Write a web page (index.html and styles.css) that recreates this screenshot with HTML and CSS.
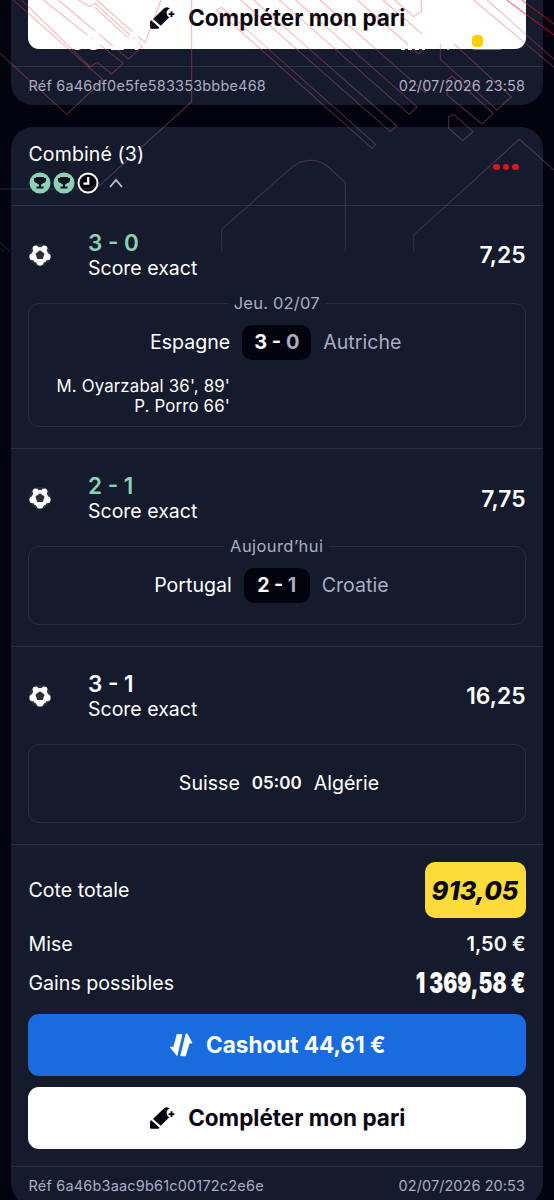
FILE: index.html
```
<!DOCTYPE html>
<html lang="fr">
<head>
<meta charset="utf-8">
<title>Mes paris</title>
<link rel="stylesheet" href="styles.css">
</head>
<body>
<svg class="defs" width="0" height="0">
  <symbol id="pencil" viewBox="0 0 26 26">
    <path d="M4 14 14.500 3.700Q18 .600 21 3.800Q17.500 4.600 17.600 8.600Q18 11.200 20.300 12.300L11.800 20.800Z"/>
    <path d="M2.300 15.200 10.500 22.700 9.500 23.700H2.300Q1 23.700 1 22.400V16.500Z"/>
    <path d="M22.500 6.200V12M19.600 9.100H25.400" stroke="currentColor" stroke-width="1.900"/>
  </symbol>
  <symbol id="ball" viewBox="0 0 24 24">
    <circle cx="12" cy="12" r="11" fill="#2d2e38"/>
    <g fill="#fff">
      <circle cx="12" cy="12.300" r="8.300"/>
      <circle cx="7.600" cy="5.400" r="3"/>
      <circle cx="16.400" cy="5.400" r="3"/>
      <circle cx="4.900" cy="13.700" r="3.500"/>
      <circle cx="19.100" cy="13.700" r="3.500"/>
      <circle cx="12" cy="18.900" r="3.600"/>
    </g>
    <path d="M12 7.300 16.500 10.500 14.800 15.900H9.200L7.500 10.500Z" fill="#2d2e38"/>
  </symbol>
  <symbol id="cup" viewBox="0 0 22 22">
    <circle cx="11" cy="11" r="10.500" fill="#8bd3b4"/>
    <path d="M7 5H15V6H17V8Q17 10.600 14.300 11Q13.500 12.200 12 12.600V14.500H14.500V16.500H7.500V14.500H10V12.600Q8.500 12.200 7.700 11Q5 10.600 5 8V6H7Z" fill="#0b1020"/>
  </symbol>
</svg>
<main class="screen">
  <article class="card card-prev">
    <button class="btn btn-light"><svg class="ico"><use href="#pencil"/></svg><span>Compléter mon pari</span></button>
    <footer class="foot"><span>Réf 6a46df0e5fe583353bbbe468</span><span class="date">02/07/2026 23:58</span></footer>
  </article>

  <article class="card">
    <header class="head">
      <div>
        <div class="head-title">Combiné (3)</div>
        <div class="states">
          <svg class="state"><use href="#cup"/></svg>
          <svg class="state"><use href="#cup"/></svg>
          <svg class="state" viewBox="0 0 22 22"><circle cx="11" cy="11" r="9.500" fill="#05030f" stroke="#fff" stroke-width="1.900"/><path d="M11.200 5V11.700H6.500" fill="none" stroke="#fff" stroke-width="2.200"/></svg>
          <svg class="chev" viewBox="0 0 14 10"><path d="M1 9 7 2 13 9" fill="none" stroke="#b9bdd2" stroke-width="1.800"/></svg>
        </div>
      </div>
      <div class="dots"><i></i><i></i><i></i></div>
    </header>

    <section class="leg">
      <div class="pick">
        <svg class="ball"><use href="#ball"/></svg>
        <div class="pick-text"><div class="score won">3 - 0</div><div class="market">Score exact</div></div>
        <div class="odds">7,25</div>
      </div>
      <div class="match match-tall">
        <div class="when"><span>Jeu. 02/07</span></div>
        <div class="teams">
          <div class="home">Espagne</div>
          <div class="result">3 - <em>0</em></div>
          <div class="away lost">Autriche</div>
        </div>
        <div class="scorers">M. Oyarzabal 36', 89'<br>P. Porro 66'</div>
      </div>
    </section>

    <section class="leg">
      <div class="pick">
        <svg class="ball"><use href="#ball"/></svg>
        <div class="pick-text"><div class="score won">2 - 1</div><div class="market">Score exact</div></div>
        <div class="odds">7,75</div>
      </div>
      <div class="match">
        <div class="when when-today"><span>Aujourd’hui</span></div>
        <div class="teams">
          <div class="home">Portugal</div>
          <div class="result result-s">2 - <em>1</em></div>
          <div class="away lost">Croatie</div>
        </div>
      </div>
    </section>

    <section class="leg">
      <div class="pick">
        <svg class="ball"><use href="#ball"/></svg>
        <div class="pick-text"><div class="score">3 - 1</div><div class="market">Score exact</div></div>
        <div class="odds">16,25</div>
      </div>
      <div class="match match-next">
        <div class="teams">
          <div class="home">Suisse</div>
          <div class="hour">05:00</div>
          <div class="away">Algérie</div>
        </div>
      </div>
    </section>

    <section class="totals">
      <div class="line line-odds"><span>Cote totale</span><b class="pill">913,05</b></div>
      <div class="line line-stake"><span>Mise</span><b class="stake">1,50 €</b></div>
      <div class="line line-gain"><span>Gains possibles</span><b class="gain">1 369,58 €</b></div>
      <button class="btn btn-blue">
        <svg class="ico ico-cash" viewBox="0 0 24 24"><path d="M8 1.500H13L8 22.500 1.200 14.200H4.800Z" stroke="#fff" stroke-width=".8" stroke-linejoin="round"/><path d="M18.200 1 23 10H20.200L16.500 22.800H11.700L17 1Z" stroke="#fff" stroke-width=".8" stroke-linejoin="round"/></svg>
        <span>Cashout 44,61 €</span>
      </button>
      <button class="btn btn-light"><svg class="ico"><use href="#pencil"/></svg><span>Compléter mon pari</span></button>
    </section>
    <footer class="foot"><span>Réf 6a46b3aac9b61c00172c2e6e</span><span class="date">02/07/2026 20:53</span></footer>
  </article>

  <svg class="pattern" viewBox="0 0 1662 756">
    <defs>
      <linearGradient id="fade" gradientUnits="userSpaceOnUse" x1="0" y1="0" x2="0" y2="756">
        <stop offset="0" stop-color="#f02f40" stop-opacity=".36"/>
        <stop offset=".35" stop-color="#d86a72" stop-opacity=".38"/>
        <stop offset=".6" stop-color="#b8868f" stop-opacity=".3"/>
        <stop offset="1" stop-color="#a0a0b0" stop-opacity=".13"/>
      </linearGradient>
    </defs>
    <g fill="none" stroke="url(#fade)" stroke-width="3.200">
      <path d="M0 160 200 343 310 240"/>
      <path d="M40 0 310 240M65 0 270 200 292 187 335 222 370 190 130 0"/>
      <path d="M175 0 385 177 427 140 400 112 380 110 285 22 M235 0 270 20 285 10 390 105M290 0 435 128 483 0"/>
      <path d="M575 0V305L300 555Q280 566 250 567H0"/>
      <path d="M1127 433 665 22 650 30 1116 445Z"/>
      <path d="M722 0 1171 395 1191 378 761 0"/>
      <path d="M838 0 1228 343 1251 320 887 0M960 0 1275 277V235"/>
      <path d="M1072 0 1256 162 1270 150V105L1149 0"/>
      <path d="M1184 0 1241 50 1264 35V0"/>
      <path d="M1360 130 1340 122 1321 135V178L1491 330 1534 290Z"/>
      <path d="M1356 228 1341 240V285L1446 372 1480 340Z"/>
      <path d="M1346 350V385L1388 422 1419 395 1361 343Z"/>
      <path d="M1421 0 1662 202M1461 0 1662 178"/>
      <path d="M1520 0 1662 105M1566 0 1662 72" stroke="#e01830" stroke-opacity=".6"/>
      <path d="M1662 510 1558 418 1241 705V756"/>
      <path d="M665 756V688L878 500Q930 463 982 498L1036 548V756"/>
      <path d="M0 728 30 756M0 745 12 756"/>
    </g>
  </svg>

  <div class="status">
    <span class="clock">08:24</span>
    <svg class="signal" viewBox="0 0 26 18"><path d="M1 12H5V18H1ZM8 9H12V18H8ZM15 5H19V18H15ZM22 0H25V18H22Z"/></svg>
    <svg class="wifi" viewBox="0 0 26 18"><path d="M0 6Q13-6 26 6L13 18Z"/></svg>
    <span class="battery"><i></i></span>
  </div>
</main>
</body>
</html>
```
FILE: styles.css
```
* { box-sizing: border-box; }
body {
  margin: 0;
  background: #03020f;
  color: #fff;
  font-family: Inter, "Liberation Sans", sans-serif;
  font-size: 19.6px;
}
.defs { position: absolute; }
.screen {
  position: relative;
  height: 1200px;
  overflow: hidden;
  padding: 0 11.5px 0 11px;
}
.card {
  background: #151a2d;
  border-radius: 22px;
  margin-bottom: 22px;
}
.card-prev {
  border-radius: 0 0 22px 22px;
  margin-top: -13px;
  height: 118px;
  padding-top: 0;
}
.btn {
  display: flex;
  align-items: center;
  justify-content: center;
  width: 497.5px;
  height: 61.5px;
  margin: 0 auto;
  padding: 1px 0 0 1px;
  border: 0;
  border-radius: 11px;
  font: 700 22.5px/1 Inter, "Liberation Sans", sans-serif;
  gap: 13px;
}
.card-prev .btn { padding-top: 0; }
.btn-light { background: #fff; color: #070512; }
.btn-blue { background: #186cde; color: #fff; margin-bottom: 11.5px; }
.ico { width: 26px; height: 26px; fill: currentColor; }
.ico-cash { width: 24px; height: 24px; }
.foot {
  display: flex;
  justify-content: space-between;
  margin-top: 17px;
  border-top: 1.5px solid #2b2f41;
  height: 39px;
  padding: 0 17.5px;
  line-height: 38px;
  font-size: 14.5px;
  letter-spacing: .18px;
  color: #a9adc3;
}
.foot .date { letter-spacing: .07px; }
.head {
  display: flex;
  justify-content: space-between;
  height: 78px;
  padding: 15px 24px 0 17.5px;
}
.head-title { font-size: 19.5px; line-height: 25px; letter-spacing: .12px; }
.states { display: flex; gap: 2px; margin-top: 5px; }
.state { width: 22px; height: 22px; }
.chev { width: 14px; height: 10px; margin: 6px 0 0 8px; }
.dots { display: flex; gap: 3px; margin-top: 21.5px; }
.dots i { width: 6.5px; height: 6.5px; border-radius: 50%; background: #dc1522; }
.leg {
  border-top: 1.5px solid #2b2f41;
  padding: 23.5px 17px 21.3px;
}
.pick { display: flex; align-items: center; height: 51px; }
.ball { width: 24px; height: 24px; margin: -1px 0 0 -.5px; }
.pick-text { flex: 1; padding-left: 36.5px; }
.score { font-size: 22.5px; font-weight: 600; line-height: 26px; }
.won { color: #8bd3b4; }
.market { font-size: 19.5px; line-height: 25px; }
.odds { font-size: 22.8px; font-weight: 600; margin-top: -.5px; }
.match {
  position: relative;
  margin-top: 22px;
  height: 79px;
  border: 1.5px solid #2a2e40;
  border-radius: 11px;
  padding-top: 20.5px;
}
.match-tall { height: 124.5px; }
.when {
  position: absolute;
  top: -12px;
  left: 0;
  right: 0;
  text-align: center;
  font-size: 16.5px;
  line-height: 23px;
  letter-spacing: .2px;
  color: #a9adc3;
}
.when-today { letter-spacing: .42px; }
.when span { background: #151a2d; padding: 0 6px; }
.teams {
  display: grid;
  grid-template-columns: 1fr auto 1fr;
  align-items: center;
  height: 36px;
  gap: 12px;
  line-height: 36px;
}
.home { text-align: right; }
.lost { color: #a9adc3; }
.result {
  background: #03020f;
  border-radius: 10px;
  width: 69px;
  height: 35px;
  line-height: 35px;
  text-align: center;
  font-weight: 700;
  font-size: 20px;
}
.result-s { width: 66px; font-size: 19.5px; }
.result em { font-style: normal; color: #a9adc3; }
.scorers {
  width: 201px;
  margin-top: 16px;
  text-align: right;
  font-size: 16.8px;
  line-height: 20px;
  letter-spacing: .18px;
}
.hour { font-size: 17px; font-weight: 600; }
.totals { border-top: 1.5px solid #2b2f41; padding-top: 17.3px; }
.line {
  display: flex;
  justify-content: space-between;
  align-items: center;
  padding: 0 17px 0 17.5px;
}
.line-odds { height: 56px; }
.line-stake { height: 40px; margin-top: 6px; }
.line-gain { height: 38px; margin-bottom: 12px; }
.pill {
  width: 101px;
  height: 56px;
  border-radius: 10px;
  background: #fddb3a;
  color: #08060c;
  font: italic 800 25.5px/57px Inter, "Liberation Sans", sans-serif;
  text-align: center;
}
.stake { font-weight: 600; font-size: 20px; }
.gain {
  font-size: 29px;
  font-weight: 900;
  line-height: 30px;
  white-space: nowrap;
  transform: scaleX(.72);
  transform-origin: right center;
}
.pattern {
  position: absolute;
  left: 0;
  top: 0;
  width: 554px;
  height: 252px;
  pointer-events: none;
}
.status {
  position: absolute;
  left: 0;
  top: 32px;
  width: 554px;
  height: 18px;
  display: flex;
  align-items: flex-end;
  padding: 0 51px 0 69px;
}
.status svg { fill: #fff; }
.clock { flex: 1; font-size: 25px; font-weight: 600; line-height: 17px; }
.signal { width: 26px; height: 18px; margin-right: 9px; }
.wifi { width: 26px; height: 18px; margin-right: 10px; }
.battery {
  width: 32px;
  height: 15px;
  border-radius: 4px;
  background: rgba(255, 255, 255, .4);
}
.battery i { display: block; width: 11px; height: 12px; margin-left: 1px; border-radius: 4px; background: #fbd000; }
```
